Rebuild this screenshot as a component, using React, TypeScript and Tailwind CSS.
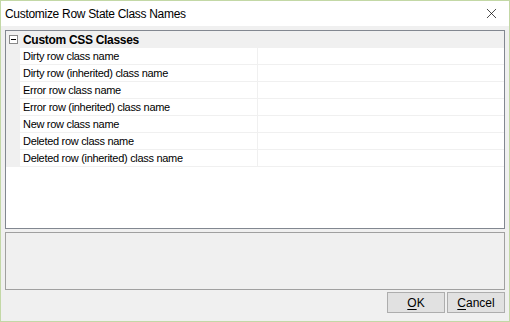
import { X } from 'lucide-react';

const rows = [
  'Dirty row class name',
  'Dirty row (inherited) class name',
  'Error row class name',
  'Error row (inherited) class name',
  'New row class name',
  'Deleted row class name',
  'Deleted row (inherited) class name',
];

const ui = { fontFamily: '"Liberation Sans", Arial, sans-serif' };

export default function App() {
  return (
    <div
      className="flex h-[322px] w-[510px] flex-col border border-[#c3d8a6] bg-[#f0f0f0] text-black"
      style={ui}
    >
      {/* title bar */}
      <div className="flex h-[25px] items-center justify-between bg-white pl-[4px] pr-[9px]">
        <span className="text-[12px] tracking-[-0.3px]">Customize Row State Class Names</span>
        <X className="h-[17px] w-[17px]" strokeWidth={1} />
      </div>

      <div className="flex flex-1 flex-col px-[4px] pt-[4px] pb-[8px]">
        {/* property grid */}
        <div className="flex h-[199px] flex-col border border-[#828790] bg-white">
          <div className="flex h-[17px] items-center bg-[#f0f0f0]">
            <div className="flex w-[14px] justify-center">
              <div className="relative h-[9px] w-[9px] border border-[#8a8a8a] bg-white">
                <div className="absolute left-[1px] top-[3px] h-px w-[5px] bg-black" />
              </div>
            </div>
            <span className="pl-[3px] text-[12px] font-bold tracking-[-0.3px]">Custom CSS Classes</span>
          </div>
          {rows.map((r) => (
            <div key={r} className="flex h-[17px]">
              <div className="w-[14px] bg-[#f0f0f0]" />
              <div className="flex w-[237px] items-center border-b border-[#f0f0f0] pl-[3px] text-[11px] tracking-[-0.3px]">
                {r}
              </div>
              <div className="flex-1 border-b border-l border-[#f0f0f0]" />
            </div>
          ))}
        </div>

        {/* description pane */}
        <div className="mt-[3px] h-[58px] border border-[#a0a0a0] bg-[#f0f0f0]" />

        {/* buttons */}
        <div className="mt-[2px] flex justify-end gap-[2px]">
          <button
            type="button"
            className="h-[21px] w-[58px] border border-[#adadad] bg-[#e1e1e1] text-[12px]"
          >
            <span className="underline underline-offset-2">O</span>K
          </button>
          <button
            type="button"
            className="h-[21px] w-[58px] border border-[#adadad] bg-[#e1e1e1] text-[12px]"
          >
            <span className="underline underline-offset-2">C</span>ancel
          </button>
        </div>
      </div>
    </div>
  );
}
